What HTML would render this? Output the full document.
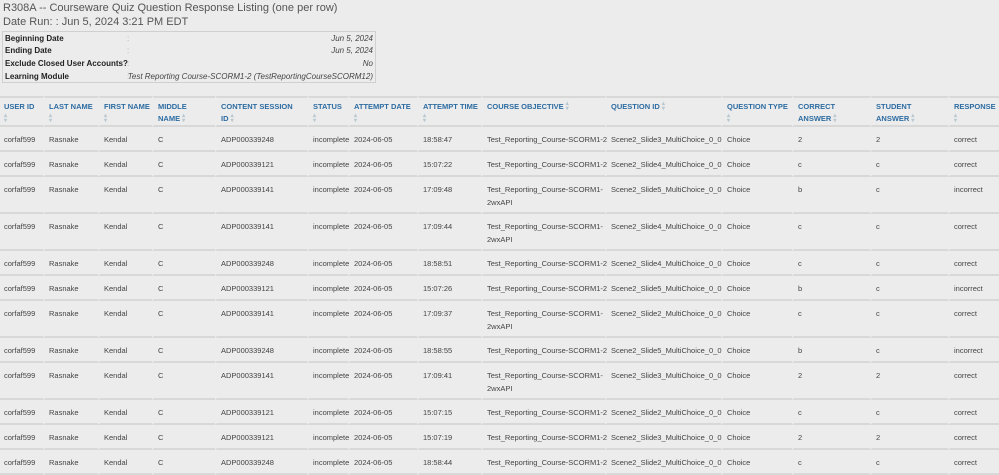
<!DOCTYPE html>
<html><head><meta charset="utf-8"><style>
*{margin:0;padding:0;box-sizing:border-box}
body{width:999px;height:475px;overflow:hidden;background:#ececec;font-family:"Liberation Sans",sans-serif;color:#444}
.t1{position:absolute;left:3px;top:2px;font-size:11px;color:#555}
.t2{position:absolute;left:3px;top:16px;font-size:11px;color:#555}
.info{position:absolute;left:2px;top:31px;width:374px;height:52px;border:1px solid #d0d0d0;font-size:8px}
.info div{position:absolute;height:13px;line-height:13px;white-space:nowrap}
.l{left:2px;font-weight:bold;color:#222}
.c{left:124px;color:#aaa}
.v{right:2px;font-style:italic;color:#444}
table{position:absolute;left:0;top:96px;border-collapse:separate;border-spacing:0;table-layout:fixed;width:999px;font-size:7.5px}
th,td{text-align:left;vertical-align:top;padding:6px 0 0 4px;border-bottom:2px solid #d8d8d8;border-left:2px solid #ececec;line-height:13px;overflow:visible;white-space:nowrap}
td{color:#444}
th{border-top:2px solid #d8d8d8;padding-top:3px;color:#2d6ca2;font-weight:bold;height:30px;line-height:12px;font-size:7.5px}
th:first-child,td:first-child{border-left:0;padding-left:4px}
.s{display:inline-block;color:#b8c8d0;font-size:6px;line-height:5px;vertical-align:middle;width:6px}
tr.a td{height:25px}
tr.b td{height:37px}
</style></head><body>
<div class="t1">R308A -- Courseware Quiz Question Response Listing (one per row)</div>
<div class="t2">Date Run: : Jun 5, 2024 3:21 PM EDT</div>
<div class="info">
<div class="l" style="top:0">Beginning Date</div><div class="c" style="top:0">:</div><div class="v" style="top:0">Jun 5, 2024</div>
<div class="l" style="top:12px">Ending Date</div><div class="c" style="top:12px">:</div><div class="v" style="top:12px">Jun 5, 2024</div>
<div class="l" style="top:25px">Exclude Closed User Accounts?</div><div class="c" style="top:25px">:</div><div class="v" style="top:25px">No</div>
<div class="l" style="top:38px">Learning Module</div><div class="c" style="top:38px">:</div><div class="v" style="top:38px">Test Reporting Course-SCORM1-2 (TestReportingCourseSCORM12)</div>
</div>
<table>
<colgroup><col style="width:43px"><col style="width:55px"><col style="width:54px"><col style="width:63px"><col style="width:92px"><col style="width:41px"><col style="width:69px"><col style="width:64px"><col style="width:124px"><col style="width:116px"><col style="width:71px"><col style="width:78px"><col style="width:78px"><col style="width:51px"></colgroup>
<tr><th>USER ID<br><span class="s">▴<br>▾</span></th><th>LAST NAME<br><span class="s">▴<br>▾</span></th><th>FIRST NAME<br><span class="s">▴<br>▾</span></th><th>MIDDLE<br>NAME <span class="s">▴<br>▾</span></th><th>CONTENT SESSION<br>ID <span class="s">▴<br>▾</span></th><th>STATUS<br><span class="s">▴<br>▾</span></th><th>ATTEMPT DATE<br><span class="s">▴<br>▾</span></th><th>ATTEMPT TIME<br><span class="s">▴<br>▾</span></th><th>COURSE OBJECTIVE <span class="s">▴<br>▾</span></th><th>QUESTION ID <span class="s">▴<br>▾</span></th><th>QUESTION TYPE<br><span class="s">▴<br>▾</span></th><th>CORRECT<br>ANSWER <span class="s">▴<br>▾</span></th><th>STUDENT<br>ANSWER <span class="s">▴<br>▾</span></th><th>RESPONSE<br><span class="s">▴<br>▾</span></th></tr>
<tr class="a"><td>corfaf599</td><td>Rasnake</td><td>Kendal</td><td>C</td><td>ADP000339248</td><td>incomplete</td><td>2024-06-05</td><td>18:58:47</td><td>Test_Reporting_Course-SCORM1-2</td><td>Scene2_Slide3_MultiChoice_0_0</td><td>Choice</td><td>2</td><td>2</td><td>correct</td></tr>
<tr class="a"><td>corfaf599</td><td>Rasnake</td><td>Kendal</td><td>C</td><td>ADP000339121</td><td>incomplete</td><td>2024-06-05</td><td>15:07:22</td><td>Test_Reporting_Course-SCORM1-2</td><td>Scene2_Slide4_MultiChoice_0_0</td><td>Choice</td><td>c</td><td>c</td><td>correct</td></tr>
<tr class="b"><td>corfaf599</td><td>Rasnake</td><td>Kendal</td><td>C</td><td>ADP000339141</td><td>incomplete</td><td>2024-06-05</td><td>17:09:48</td><td>Test_Reporting_Course-SCORM1-<br>2wxAPI</td><td>Scene2_Slide5_MultiChoice_0_0</td><td>Choice</td><td>b</td><td>c</td><td>incorrect</td></tr>
<tr class="b"><td>corfaf599</td><td>Rasnake</td><td>Kendal</td><td>C</td><td>ADP000339141</td><td>incomplete</td><td>2024-06-05</td><td>17:09:44</td><td>Test_Reporting_Course-SCORM1-<br>2wxAPI</td><td>Scene2_Slide4_MultiChoice_0_0</td><td>Choice</td><td>c</td><td>c</td><td>correct</td></tr>
<tr class="a"><td>corfaf599</td><td>Rasnake</td><td>Kendal</td><td>C</td><td>ADP000339248</td><td>incomplete</td><td>2024-06-05</td><td>18:58:51</td><td>Test_Reporting_Course-SCORM1-2</td><td>Scene2_Slide4_MultiChoice_0_0</td><td>Choice</td><td>c</td><td>c</td><td>correct</td></tr>
<tr class="a"><td>corfaf599</td><td>Rasnake</td><td>Kendal</td><td>C</td><td>ADP000339121</td><td>incomplete</td><td>2024-06-05</td><td>15:07:26</td><td>Test_Reporting_Course-SCORM1-2</td><td>Scene2_Slide5_MultiChoice_0_0</td><td>Choice</td><td>b</td><td>c</td><td>incorrect</td></tr>
<tr class="b"><td>corfaf599</td><td>Rasnake</td><td>Kendal</td><td>C</td><td>ADP000339141</td><td>incomplete</td><td>2024-06-05</td><td>17:09:37</td><td>Test_Reporting_Course-SCORM1-<br>2wxAPI</td><td>Scene2_Slide2_MultiChoice_0_0</td><td>Choice</td><td>c</td><td>c</td><td>correct</td></tr>
<tr class="a"><td>corfaf599</td><td>Rasnake</td><td>Kendal</td><td>C</td><td>ADP000339248</td><td>incomplete</td><td>2024-06-05</td><td>18:58:55</td><td>Test_Reporting_Course-SCORM1-2</td><td>Scene2_Slide5_MultiChoice_0_0</td><td>Choice</td><td>b</td><td>c</td><td>incorrect</td></tr>
<tr class="b"><td>corfaf599</td><td>Rasnake</td><td>Kendal</td><td>C</td><td>ADP000339141</td><td>incomplete</td><td>2024-06-05</td><td>17:09:41</td><td>Test_Reporting_Course-SCORM1-<br>2wxAPI</td><td>Scene2_Slide3_MultiChoice_0_0</td><td>Choice</td><td>2</td><td>2</td><td>correct</td></tr>
<tr class="a"><td>corfaf599</td><td>Rasnake</td><td>Kendal</td><td>C</td><td>ADP000339121</td><td>incomplete</td><td>2024-06-05</td><td>15:07:15</td><td>Test_Reporting_Course-SCORM1-2</td><td>Scene2_Slide2_MultiChoice_0_0</td><td>Choice</td><td>c</td><td>c</td><td>correct</td></tr>
<tr class="a"><td>corfaf599</td><td>Rasnake</td><td>Kendal</td><td>C</td><td>ADP000339121</td><td>incomplete</td><td>2024-06-05</td><td>15:07:19</td><td>Test_Reporting_Course-SCORM1-2</td><td>Scene2_Slide3_MultiChoice_0_0</td><td>Choice</td><td>2</td><td>2</td><td>correct</td></tr>
<tr class="a"><td>corfaf599</td><td>Rasnake</td><td>Kendal</td><td>C</td><td>ADP000339248</td><td>incomplete</td><td>2024-06-05</td><td>18:58:44</td><td>Test_Reporting_Course-SCORM1-2</td><td>Scene2_Slide2_MultiChoice_0_0</td><td>Choice</td><td>c</td><td>c</td><td>correct</td></tr>
</table>
</body></html>
